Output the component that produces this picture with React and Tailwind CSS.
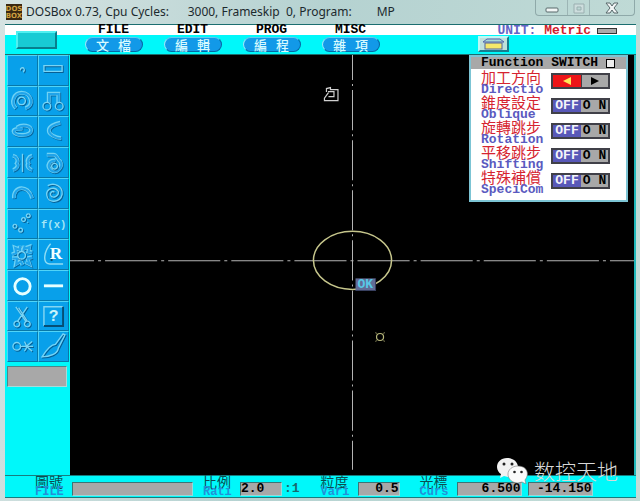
import React from "react";

const MENUS = [
  ["FILE", "文 檔"],
  ["EDIT", "編 輯"],
  ["PROG", "編 程"],
  ["MISC", "雜 項"],
];

const SWITCHES = [
  ["錐度設定", "Oblique"],
  ["旋轉跳步", "Rotation"],
  ["平移跳步", "Shifting"],
  ["特殊補償", "SpeciCom"],
];

// Each tool has thin embossed lines and, where its shape is a tube, a thick path.
const TOOLS = [
  ["Point", "M13 15a2 2 0 1 1 3 1M17 14l-1 3"],
  ["Line", "M5 10H24V16H5Z"],
  ["Circle", "M14 10.500a4 4 0 1 0 .1 0Z", "M8 22C2 16 6 6 14 6C25 6 27 20 18 22"],
  ["Tangent", "M4 20a4 4 0 1 0 8 0a4 4 0 1 0-8 0M17 20a4 4 0 1 0 8 0a4 4 0 1 0-8 0", "M10 17V7H20V17"],
  ["Ellipse", "", "M9 11C15 7 24 9 24 14C23 20 9 20 6 16C4 13 9 12 15 12"],
  ["Parabola", "", "M22 6C16 7 10 10 10 14C10 18 17 22 23 22"],
  ["Hyperbola", "M15 6V25", "M5 8C9 9 11 13 9 16C11 18 9 22 5 23M25 8C21 9 19 13 21 16C19 18 21 22 25 23"],
  ["Cam curve", "M16 16a3 3 0 1 0 .1 0Z", "M8 7H15C19 7 18 11 22 14C25 20 18 27 12 23C7 18 11 12 17 13"],
  ["Arc", "", "M6 20C5 7 21 5 25 20"],
  ["Spiral", "M9 7C16 3 25 8 24 16C22 25 9 26 8 17C7 10 16 7 20 13C21 18 14 21 12 17C11 14 14 12 16 14"],
  ["List curve", "M21 4a2 2 0 1 0 .1 0M16 8a2 2 0 1 0 .1 0M7 15a2 2 0 1 0 .1 0M13 19a2 2 0 1 0 .1 0M20 13h1"],
  ["Function", ""],
  ["Gear", "M14 12a4 4 0 1 0 .1 0Z", "M12 6V10L7 8L8 13L4 15M4 19H9L8 25L13 22L15 26M17 6L16 9L22 7L21 12L25 13M25 18L20 19L22 25L18 23"],
  ["Fillet", ""],
  ["Auxiliary circle", ""],
  ["Auxiliary line", ""],
  ["Trim", "M9 20a3 3 0 1 0 .1 0M20 20a3 3 0 1 0 .1 0M8 5L19 21M11 6L20 20M20 5L10 20"],
  ["Query", ""],
  ["Cleanup", "M5 15a4 4 0 1 0 8 0a4 4 0 1 0-8 0M12 15H26M17 10C20 14 20 17 17 20M25 10L19 15L25 20"],
  ["Redraw", "M25 2L17 13C13 13 8 18 3 26C11 26 19 23 20 17L27 3Z"],
];

function ToolIcon({ name, path, tube }) {
  if (name === "Function")
    return (
      <svg viewBox="0 0 30 30" className="size-full" fontFamily="Liberation Mono, monospace" fontSize="11" fontWeight="700">
        <text x="2" y="19" fill="#a4e6f6">f(x)</text>
      </svg>
    );
  if (name === "Fillet")
    return (
      <svg viewBox="0 0 30 30" className="size-full">
        <path d="M12 4C5 12 3 25 11 25H25" fill="none" stroke="#8edcf4" strokeWidth="1.500" />
        <path d="M13 22V10" stroke="#064e70" strokeWidth="2" />
        <text x="11" y="20" fontFamily="Liberation Serif, serif" fontSize="18" fontWeight="700" fill="#f2ffff">R</text>
      </svg>
    );
  if (name === "Query")
    return (
      <svg viewBox="0 0 30 30" className="size-full">
        <path d="M5 25V5H25" fill="none" stroke="#83d6f2" strokeWidth="1.500" />
        <path d="M5 25H25V5" fill="none" stroke="#064e75" strokeWidth="2" />
        <text x="10" y="20" fontFamily="Liberation Mono, monospace" fontSize="17" fontWeight="700" fill="#c8f4fa">?</text>
      </svg>
    );
  if (name === "Auxiliary circle")
    return (
      <svg viewBox="0 0 30 30" className="size-full">
        <circle cx="15" cy="16" r="8" fill="none" stroke="#e6ffff" strokeWidth="3" />
      </svg>
    );
  if (name === "Auxiliary line")
    return (
      <svg viewBox="0 0 30 30" className="size-full">
        <path d="M5 15.500H25" stroke="#e6ffff" strokeWidth="3" />
      </svg>
    );
  return (
    <svg viewBox="0 0 30 30" className="size-full" fill="none" strokeWidth="1.400">
      {tube && (
        <>
          <path d={tube} stroke="#0668a2" strokeWidth="4" transform="translate(1 1)" />
          <path d={tube} stroke="#70d2f4" strokeWidth="4" />
          <path d={tube} stroke="#20a4ea" strokeWidth="2.200" transform="translate(.4 .4)" />
        </>
      )}
      <path d={path} stroke="#075f94" transform="translate(1 1)" />
      <path d={path} stroke="#78d4f4" />
    </svg>
  );
}

function TitleBar() {
  return (
    <div className="flex h-6 items-start justify-between pl-px pr-px">
      <div className="flex items-center gap-1 pt-[2px]">
        <svg viewBox="0 0 16 16" className="size-4" fontFamily="DejaVu Sans, sans-serif" fontWeight="700" fontSize="7" textAnchor="middle">
          <rect width="16" height="16" fill="#3a2812" />
          <text x="8" y="7" fill="#d0a040">DOS</text>
          <text x="8" y="14" fill="#d0a040">BOX</text>
        </svg>
        <h1 className="whitespace-pre font-['Noto_Sans',sans-serif] text-[12px] font-normal leading-5 text-[#1c2a2e]">
          {"DOSBox 0.73, Cpu Cycles:      3000, Frameskip  0, Program:        MP"}
        </h1>
      </div>
      <div className="flex h-4 w-[100px] rounded-b border border-t-0 border-[#8fa9a9] text-[#59686b]">
        <button aria-label="Minimize" className="flex w-8 items-center justify-center border-r border-[#9db5b5]">
          <svg viewBox="0 0 14 14" className="mt-1 size-[14px]"><rect x="1" y="5" width="12" height="4" rx="1" fill="#f2f6f6" stroke="currentColor" /></svg>
        </button>
        <button aria-label="Maximize" className="flex w-[22px] items-center justify-center border-r border-[#9db5b5] text-[#9aafb0]">
          <svg viewBox="0 0 14 14" className="size-[14px]"><path d="M2 3H12V12H2ZM5 6H9V9H5Z" fill="#cddddd" stroke="currentColor" fillRule="evenodd" /></svg>
        </button>
        <button aria-label="Close" className="flex flex-1 items-center justify-center">
          <svg viewBox="0 0 14 14" className="size-[14px]"><path d="M1 2H5L7 5L9 2H13L9 7L13 12H9L7 9L5 12H1L5 7Z" fill="#f2f6f6" stroke="currentColor" /></svg>
        </button>
      </div>
    </div>
  );
}

function Header() {
  return (
    <header className="flex h-[31px] border-y border-[#1b6e70] bg-[linear-gradient(#fff_10px,#00f8fa_10px)]">
      <button aria-label="Home" className="ml-[11px] mt-[6px] h-[18px] w-[41px] border-2 border-b-[#087f8e] border-l-[#50f0f0] border-r-[#087f8e] border-t-[#50f0f0] bg-[#18cbd4]" />
      <nav className="ml-[17px] flex">
        {MENUS.map(([label, title]) => (
          <div key={label} className="flex w-[79px] flex-col items-center gap-[2px]">
            <span className="text-[13px] leading-[10px]">{label}</span>
            <button aria-label={label} className="flex h-[15px] w-[58px] items-center justify-center whitespace-pre rounded-full border border-b-[#0668a5] border-l-[#98e8fa] border-r-[#0668a5] border-t-[#60c8f0] bg-[#1299e8] font-['Noto_Sans_CJK_TC',sans-serif] text-[13px] font-medium leading-[13px] text-[#d8fbff]">
              {title.replace(" ", "   ")}
            </button>
          </div>
        ))}
      </nav>
      <button aria-label="Calculator" className="ml-auto mt-[11px] h-4 w-[31px] border-2 border-b-[#187c8e] border-l-[#bdf8f4] border-r-[#187c8e] border-t-[#bdf8f4] bg-[#bfe0dc]">
        <svg viewBox="0 0 27 12" className="size-full">
          <path d="M3 4L7 1H20L24 4Z" fill="#a8d8d8" stroke="#5265aa" />
          <rect x="5" y="5" width="17" height="6" fill="#f5e86a" stroke="#54649a" />
        </svg>
      </button>
      <div className="-ml-3 mr-[19px] flex h-[11px] items-center gap-[6px] text-[13px] leading-[11px]">
        <p className="whitespace-pre text-[#6464c6]">UNIT: <span className="text-[#d11e2e]">Metric</span></p>
        <span className="h-[6px] w-5 border border-[#333] bg-[#aaa]" />
      </div>
    </header>
  );
}

function Sidebar() {
  return (
    <aside className="w-[65px] shrink-0 bg-[#00f8fa] pl-[2px] pr-[1px]">
      <div className="grid h-[307px] grid-cols-2 grid-rows-10">
        {TOOLS.map(([name, path, tube]) => (
          <button key={name} aria-label={name} className="min-h-0 border border-b-[#0878a8] border-l-[#50d4f8] border-r-[#0878a8] border-t-[#50d4f8] bg-[#08a0ea]">
            <ToolIcon name={name} path={path} tube={tube} />
          </button>
        ))}
      </div>
      <div className="mr-[2px] mt-1 h-[21px] border border-b-[#a8dada] border-l-[#4d8688] border-r-[#a8dada] border-t-[#4d8688] bg-[#a8a8a8]" />
    </aside>
  );
}

function Drawing() {
  return (
    <svg viewBox="0 0 563 419" preserveAspectRatio="xMidYMid meet" className="block size-full" fill="none">
      <path d="M282 0V414" stroke="#b4b4b4" strokeDasharray="40 4 2 4" strokeDashoffset="15" />
      <path d="M0 205.500H563" stroke="#b4b4b4" strokeDasharray="52 4 3 4" strokeDashoffset="28" />
      <ellipse cx="282" cy="205" rx="39" ry="29" stroke="#c6c68c" strokeWidth="1.500" />
      <path d="M256 37V33.500L260 32.500V34.500H267.500V45.500H254V43L258 37.500M257.500 36.500H263.500V41.500H258" stroke="#d0d0d0" strokeWidth="1.200" />
      <circle cx="309.500" cy="281.500" r="3.500" stroke="#b8b87c" strokeWidth="1.200" />
      <path d="M306 278l-1-1M313 278l1-1M306 285l-1 1M313 285l1 1" stroke="#b8b87c" />
      <rect x="285" y="223" width="20" height="12" fill="#626c96" />
      <path d="M285 235H305V223" stroke="#384060" />
      <text x="287" y="233" fontFamily="Liberation Mono, monospace" fontSize="13" fontWeight="700" fill="#58c8e6">OK</text>
    </svg>
  );
}

function SwitchRow({ title, label, children }) {
  return (
    <div className="flex h-[25px] justify-between pl-[10px] pr-4">
      <div>
        <p className="font-['Noto_Sans_CJK_TC',sans-serif] text-[15px] font-normal leading-[13px] text-[#d62430]">{title}</p>
        <p className="text-[13px] leading-[13px] text-[#5a5ac0]">{label}</p>
      </div>
      <div className="mt-[3px] flex h-4 w-[59px] border-2 border-[#404048] bg-[#a8a8a8] text-[13px] leading-3">{children}</div>
    </div>
  );
}

function SwitchPanel() {
  return (
    <section className="absolute right-[6px] top-0 w-[159px] border-2 border-[#7cc4d4] bg-white pb-[5px]">
      <h2 className="flex h-[12px] items-center justify-between bg-[#a8a8a8] pl-[10px] pr-[11px] text-[13px] leading-3">
        Function SWITCH
        <span className="size-[9px] border border-black bg-[#eee]" />
      </h2>
      <div className="pt-px">
        <SwitchRow title="加工方向" label="Directio">
          <button aria-label="Left" className="flex w-7 items-center justify-center bg-[#ee1518]">
            <svg viewBox="0 0 8 8" className="size-2"><path d="M8 0V8L0 4Z" fill="#ffe858" /></svg>
          </button>
          <button aria-label="Right" className="flex flex-1 items-center justify-center border-l border-[#404048]">
            <svg viewBox="0 0 8 8" className="size-2"><path d="M0 0V8L8 4Z" fill="#000" /></svg>
          </button>
        </SwitchRow>
        {SWITCHES.map(([title, label]) => (
          <SwitchRow key={label} title={title} label={label}>
            <button className="w-7 bg-[#5858b8] text-center text-[#f4f4fa]">OFF</button>
            <button className="flex-1 whitespace-nowrap text-center">O N</button>
          </SwitchRow>
        ))}
      </div>
    </section>
  );
}

function Field({ title, label, id, value, className, suffix }) {
  return (
    <div className="flex">
      <label htmlFor={id} className="w-[37px] shrink-0">
        <span className="block font-['Noto_Sans_CJK_TC',sans-serif] text-[14px] font-normal leading-[11px] text-[#0a4c50]">{title}</span>
        <span className="block text-[12px] leading-[11px] text-[#2490d8]">{label}</span>
      </label>
      <input id={id} defaultValue={value} className={"mt-[6px] h-[14px] border border-b-[#98d8d8] border-l-[#3c7476] border-r-[#98d8d8] border-t-[#3c7476] bg-[#a8a8a8] text-[13px] leading-3 text-black " + className} />
      {suffix && <span className="ml-[2px] mt-[7px] text-[13px] leading-3 text-[#18686c]">{suffix}</span>}
    </div>
  );
}

function StatusBar() {
  return (
    <footer className="flex h-[23px] border-y border-[#187c7e] bg-[#00f8fa] pl-[30px]">
      <Field id="file" title="圖號" label="FILE" value="" className="w-[121px]" />
      <div className="ml-[10px]"><Field id="ratio" title="比例" label="Rati" value="2.0" className="w-[42px]" suffix=":1" /></div>
      <div className="ml-[21px]"><Field id="vari" title="粒度" label="Vari" value="0.5" className="w-[42px] text-right" /></div>
      <div className="ml-[20px] flex gap-[6px]">
        <Field id="cursor-x" title="光標" label="Curs" value="6.500" className="w-[65px] text-right" />
        <input aria-label="Cursor Y" defaultValue="-14.150" className="mt-[6px] h-[14px] w-[65px] border border-b-[#98d8d8] border-l-[#3c7476] border-r-[#98d8d8] border-t-[#3c7476] bg-[#a8a8a8] text-right text-[13px] leading-3 text-black" />
      </div>
    </footer>
  );
}

function Watermark() {
  return (
    <div className="absolute bottom-[18px] right-[22px] flex items-center gap-[5px] whitespace-nowrap font-['Noto_Sans_CJK_SC',sans-serif] text-[21px] font-light leading-7 text-[#d8d8d8]">
      <svg viewBox="0 0 33 28" className="h-7 w-[33px]">
        <path d="M11 2C5 2 1 6 1 11C1 14 3 17 5 18L4 22L8 20L12 21C17 21 22 17 22 11C22 6 17 2 11 2Z" fill="#f2f2f2" />
        <path d="M22 10C16 10 12 14 12 18C12 23 16 27 22 27L26 26L30 28L29 24C34 18 31 10 22 10Z" fill="#fafafa" stroke="#777" strokeWidth=".6" />
        <g fill="#222"><circle cx="8" cy="8" r="1.500" /><circle cx="16" cy="8" r="1.500" /><circle cx="18.500" cy="16" r="1.300" /><circle cx="25.500" cy="16" r="1.300" /></g>
      </svg>
      数控天地
    </div>
  );
}

export default function App() {
  return (
    <div className="relative flex min-h-screen flex-col bg-[linear-gradient(100deg,#d6e3e2,#b5d2d1_45%,#c2dcd7)] pb-1 pl-[5px] pr-1 font-['Liberation_Mono',monospace] font-bold text-black">
      <TitleBar />
      <div className="flex flex-1 flex-col">
        <Header />
        <main className="flex flex-1">
          <Sidebar />
          <div className="relative min-w-0 flex-1 border-r-2 border-[#20b8ba] bg-black">
            <Drawing />
            <SwitchPanel />
          </div>
        </main>
        <StatusBar />
      </div>
      <Watermark />
    </div>
  );
}
